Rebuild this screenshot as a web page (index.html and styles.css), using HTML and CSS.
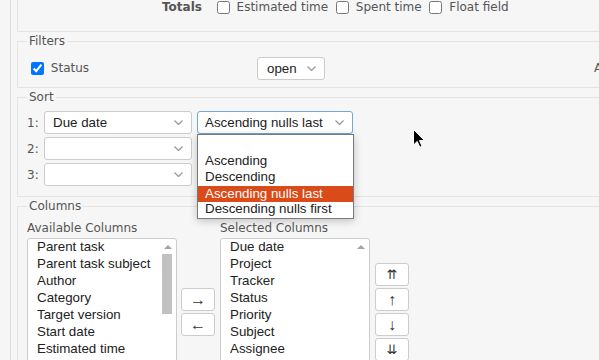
FILE: index.html
```html
<!DOCTYPE html>
<html>

<head>
    <title>Query options</title>
    <link rel="stylesheet" href="styles.css">
</head>

<body>
    <div class="content">
        <div class="options">
            <div class="totals-row">
                <span class="totals-label">Totals</span>
                <label><input type="checkbox"> Estimated time</label>
                <label><input type="checkbox"> Spent time</label>
                <label><input type="checkbox"> Float field</label>
            </div>
        </div>

        <fieldset class="filters">
            <legend>Filters</legend>
            <div class="filter-row">
                <label class="filter-field"><input type="checkbox" checked> Status</label>
                <div class="select operator">
                    <span>open</span>
                    <svg class="chevron" width="9" height="5" viewBox="0 0 9 5"><path d="M0.5 0.5L4.5 4.5L8.5 0.5" /></svg>
                </div>
                <span class="add-filter">Add filter</span>
            </div>
        </fieldset>

        <fieldset class="sort">
            <legend>Sort</legend>
            <div class="sort-row">
                <span class="sort-num">1:</span>
                <div class="select sort-field">
                    <span>Due date</span>
                    <svg class="chevron" width="9" height="5" viewBox="0 0 9 5"><path d="M0.5 0.5L4.5 4.5L8.5 0.5" /></svg>
                </div>
                <div class="sort-dir-wrap">
                    <div class="select sort-dir focused">
                        <span>Ascending nulls last</span>
                        <svg class="chevron" width="9" height="5" viewBox="0 0 9 5"><path d="M0.5 0.5L4.5 4.5L8.5 0.5" /></svg>
                    </div>
                    <!-- open dropdown of the sort direction -->
                    <div class="dropdown">
                        <div class="dropdown-option"></div>
                        <div class="dropdown-option">Ascending</div>
                        <div class="dropdown-option">Descending</div>
                        <div class="dropdown-option selected">Ascending nulls last</div>
                        <div class="dropdown-option">Descending nulls first</div>
                    </div>
                </div>
            </div>
            <div class="sort-row">
                <span class="sort-num">2:</span>
                <div class="select sort-field">
                    <span></span>
                    <svg class="chevron" width="9" height="5" viewBox="0 0 9 5"><path d="M0.5 0.5L4.5 4.5L8.5 0.5" /></svg>
                </div>
                <div class="sort-dir-wrap">
                    <div class="select sort-dir"><span></span></div>
                </div>
            </div>
            <div class="sort-row">
                <span class="sort-num">3:</span>
                <div class="select sort-field">
                    <span></span>
                    <svg class="chevron" width="9" height="5" viewBox="0 0 9 5"><path d="M0.5 0.5L4.5 4.5L8.5 0.5" /></svg>
                </div>
                <div class="sort-dir-wrap">
                    <div class="select sort-dir"><span></span></div>
                </div>
            </div>
        </fieldset>

        <fieldset class="columns">
            <legend>Columns</legend>
            <div class="columns-grid">
                <div class="col-label">Available Columns</div>
                <div></div>
                <div class="col-label">Selected Columns</div>
                <div></div>

                <div class="listbox">
                    <div class="listbox-options">
                        <div class="listbox-option">Parent task</div>
                        <div class="listbox-option">Parent task subject</div>
                        <div class="listbox-option">Author</div>
                        <div class="listbox-option">Category</div>
                        <div class="listbox-option">Target version</div>
                        <div class="listbox-option">Start date</div>
                        <div class="listbox-option">Estimated time</div>
                        <div class="listbox-option">Spent time</div>
                        <div class="listbox-option">Float field</div>
                    </div>
                    <div class="scrollbar">
                        <div class="scroll-up"></div>
                        <div class="scroll-thumb"></div>
                    </div>
                </div>
                <div class="buttons">
                    <button type="button">&rarr;</button>
                    <button type="button">&larr;</button>
                </div>
                <div class="listbox">
                    <div class="listbox-options">
                        <div class="listbox-option">Due date</div>
                        <div class="listbox-option">Project</div>
                        <div class="listbox-option">Tracker</div>
                        <div class="listbox-option">Status</div>
                        <div class="listbox-option">Priority</div>
                        <div class="listbox-option">Subject</div>
                        <div class="listbox-option">Assignee</div>
                        <div class="listbox-option">Updated</div>
                        <div class="listbox-option">Created</div>
                    </div>
                    <div class="scrollbar">
                        <div class="scroll-up"></div>
                    </div>
                </div>
                <div class="buttons">
                    <button type="button" class="move">&#8648;</button>
                    <button type="button">&uarr;</button>
                    <button type="button">&darr;</button>
                    <button type="button" class="move">&#8650;</button>
                </div>
            </div>
        </fieldset>
    </div>

    <svg class="cursor" width="12" height="19" viewBox="0 0 12 19">
        <path d="M0.5 0.5L0.5 16L4.2 12.4L6.8 18.2L9 17.2L6.5 11.6L11.5 11.6Z" />
    </svg>
</body>

</html>
```

FILE: styles.css
```css
body {
    margin: 0;
    width: 599px;
    height: 360px;
    overflow: hidden;
    position: relative;
    background-color: #f6f6f6;
    font-family: "DejaVu Sans", Verdana, sans-serif;
    font-size: 12px;
    color: #555555;
}

.content {
    margin-left: 10px;
    border-left: 1px solid #dddddd;
    padding-left: 6px;
    width: 680px;
    height: 360px;
}

input[type="checkbox"] {
    width: 13px;
    height: 13px;
    margin: 1px 3px 1px 4px;
    vertical-align: middle;
}

/* Options (top, mostly scrolled away) */
.options {
    box-sizing: border-box;
    height: 32px;
    border-left: 1px solid #e4e4e4;
    border-bottom: 1px solid #e4e4e4;
}

.totals-row {
    padding-left: 144px;
    line-height: 14px;
}

.totals-label {
    font-weight: bold;
    margin-right: 7px;
}

/* Fieldsets */
fieldset {
    margin: 2px 0 0;
    padding: 8.5px 9px 7.5px;
    border: 1px solid #e4e4e4;
    min-width: 0;
}

legend {
    padding: 0 2px;
    line-height: 14px;
    color: #555555;
}

/* Selects */
.select {
    display: flex;
    align-items: center;
    justify-content: space-between;
    box-sizing: border-box;
    height: 23px;
    padding: 0 8px 0 8px;
    border: 1px solid #cccccc;
    border-radius: 3px;
    background-color: #ffffff;
    font-family: "Liberation Sans", Arial, sans-serif;
    font-size: 13.33px;
    color: #222222;
    white-space: nowrap;
}

.select.focused {
    border-color: #6fa8dc;
    padding-left: 7px;
}

.chevron {
    flex-shrink: 0;
}

.chevron path {
    fill: none;
    stroke: #9a9a9a;
    stroke-width: 1.3;
}

/* Filters */
.filter-row {
    display: flex;
    align-items: center;
    height: 23px;
}

.filter-field {
    width: 230px;
    flex-shrink: 0;
}

.filter-field input[type="checkbox"] {
    margin-left: 4px;
}

.operator {
    width: 68px;
    flex-shrink: 0;
    padding-left: 9px;
}

.add-filter {
    margin-left: 269px;
    white-space: nowrap;
}

/* Sort */
.sort {
    padding-top: 7px;
    padding-bottom: 10px;
}

.sort-row {
    display: flex;
    align-items: center;
    margin-bottom: 3px;
}

.sort-row:last-child {
    margin-bottom: 0;
}

.sort-num {
    width: 17px;
    flex-shrink: 0;
}

.sort-field {
    width: 148px;
    flex-shrink: 0;
}

.sort-dir-wrap {
    position: relative;
    margin-left: 5px;
}

.sort-dir {
    width: 156px;
}

.dropdown {
    position: absolute;
    top: 100%;
    left: 0;
    z-index: 10;
    box-sizing: border-box;
    width: 157px;
    padding-top: 3px;
    border: 1px solid #7a7a7a;
    background-color: #ffffff;
    box-shadow: 0 2px 8px rgba(0, 0, 0, 0.22);
    font-family: "Liberation Sans", Arial, sans-serif;
    font-size: 13.33px;
    color: #222222;
}

.dropdown-option {
    height: 16px;
    line-height: 14px;
    padding-left: 7px;
    white-space: nowrap;
}

.dropdown-option.selected {
    line-height: 15px;
    background-color: #db4a19;
    color: #ffffff;
}

/* Columns */
.columns {
    padding-top: 8px;
}

.columns-grid {
    display: grid;
    grid-template-columns: 150px 35px 151px 34px;
    column-gap: 4px;
    align-items: center;
}

.col-label {
    line-height: 14px;
    margin-bottom: 3px;
    white-space: nowrap;
}

.listbox {
    display: flex;
    box-sizing: border-box;
    width: 150px;
    height: 148px;
    border: 1px solid #cccccc;
    border-radius: 3px;
    background-color: #ffffff;
    overflow: hidden;
}

.listbox-options {
    flex: 1;
    font-family: "Liberation Sans", Arial, sans-serif;
    font-size: 13.33px;
    color: #222222;
}

.listbox-option {
    height: 17px;
    line-height: 16px;
    padding-left: 9px;
    white-space: nowrap;
}

.scrollbar {
    width: 15px;
    flex-shrink: 0;
    padding-top: 6px;
}

.scroll-up {
    width: 0;
    height: 0;
    margin-left: 3px;
    border-left: 4px solid transparent;
    border-right: 4px solid transparent;
    border-bottom: 4px solid #a3a3a3;
}

.scroll-thumb {
    width: 10px;
    height: 60px;
    margin-top: 5px;
    margin-left: 1px;
    background-color: #c1c1c1;
}

.buttons {
    display: flex;
    flex-direction: column;
    gap: 2px;
}

button {
    box-sizing: border-box;
    width: 34px;
    height: 23px;
    padding: 0;
    border: 1px solid #cccccc;
    border-radius: 3px;
    background-color: #ffffff;
    font-family: "Liberation Sans", Arial, sans-serif;
    font-size: 16px;
    line-height: 20px;
    color: #333333;
}

button.move {
    font-family: "DejaVu Sans", sans-serif;
    font-size: 13px;
}

/* Mouse pointer over the page */
.cursor {
    position: absolute;
    left: 413px;
    top: 129px;
}

.cursor path {
    fill: #000000;
    stroke: #ffffff;
    stroke-width: 1;
}
```
